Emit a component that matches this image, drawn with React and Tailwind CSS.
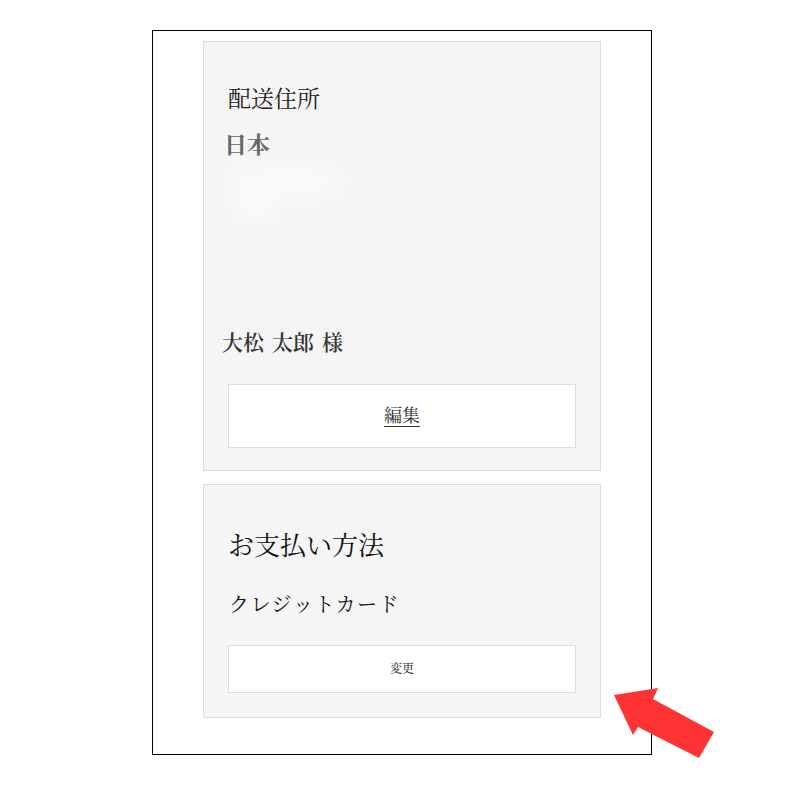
import React from "react"

const serif = { fontFamily: '"Liberation Serif", "Noto Serif CJK JP", "Noto Sans CJK JP", serif' }

function Card({ children, className = "" }) {
  return (
    <div className={`border border-[#dddddd] bg-[#f5f5f5] px-6 ${className}`}>{children}</div>
  )
}

function Arrow() {
  return (
    <svg className="absolute left-[612px] top-[686px]" width="104" height="74" viewBox="0 0 104 74">
      <polygon points="2,9 46,2 41,13 102,46 87,72 26,41 21,49" fill="#ff3333" />
    </svg>
  )
}

export default function App() {
  return (
    <div className="relative h-[800px] w-[800px] bg-white pt-[30px]" style={serif}>
      <div className="ml-[152px] flex h-[725px] w-[500px] flex-col gap-[13px] border border-black px-[50px] pt-[10px]">
        {/* shipping address */}
        <Card className="h-[430px] pt-[46px]">
          <h2 className="text-[23px] leading-[24px] text-[#222]">配送住所</h2>
          <p className="-ml-[4px] mt-[22px] text-[23px] font-bold leading-[24px] text-[#666]">日本</p>
          <div className="relative mt-[8px] h-[165px]">
            <div className="absolute left-[4px] top-[4px] h-[22px] w-[110px] rounded-full bg-white opacity-60 blur-md"></div>
            <div className="absolute left-[8px] top-[30px] h-[20px] w-[40px] rounded-full bg-white opacity-70 blur-md"></div>
          </div>
          <p className="-ml-[6px] flex gap-[8px] text-[21px] font-semibold leading-[24px] text-[#333]">
            <span>大松</span>
            <span>太郎</span>
            <span>様</span>
          </p>
          <button className="mt-[29px] flex h-[64px] w-full items-center justify-center border border-[#dddddd] bg-white text-[18px] text-[#333] underline underline-offset-4">
            編集
          </button>
        </Card>

        {/* payment */}
        <Card className="h-[234px] pt-[48px]">
          <h2 className="text-[26px] leading-[28px] text-[#111]">お支払い方法</h2>
          <p className="mt-[33px] pl-[1px] text-[20px] leading-[22px] tracking-[1.5px] text-[#111]">
            クレジットカード
          </p>
          <button className="mt-[29px] flex h-[48px] w-full items-center justify-center border border-[#dddddd] bg-white text-[12px] text-[#222]">
            変更
          </button>
        </Card>
      </div>
      <Arrow />
    </div>
  )
}
